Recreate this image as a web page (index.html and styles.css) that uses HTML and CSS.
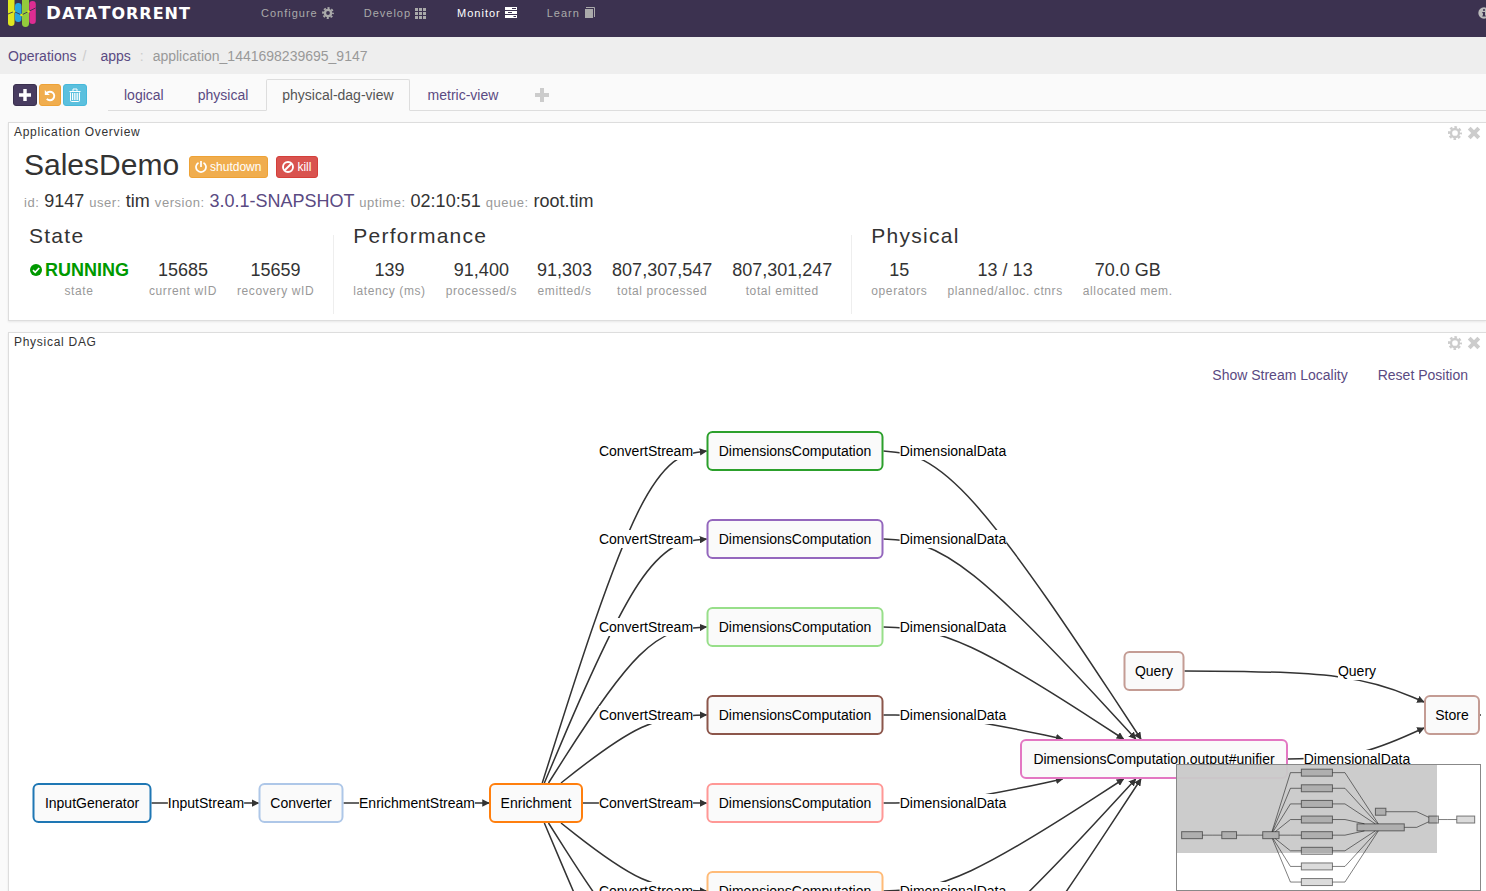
FILE: index.html
```
<!DOCTYPE html>
<html lang="en">
<head>
<meta charset="utf-8">
<title>DataTorrent - SalesDemo</title>
<link rel="stylesheet" href="styles.css">
</head>
<body>
<svg class="defs" width="0" height="0" aria-hidden="true">
  <symbol id="i-gear" viewBox="0 0 14 14"><circle cx="7" cy="7" r="3.6" fill="none" stroke="currentColor" stroke-width="2.8"/><circle cx="7" cy="7" r="5.8" fill="none" stroke="currentColor" stroke-width="2.2" stroke-dasharray="2.5 2.055" stroke-dashoffset="1.25"/></symbol>
  <symbol id="i-gear-thin" viewBox="0 0 14 14"><circle cx="7" cy="7" r="4" fill="none" stroke="currentColor" stroke-width="2.3"/><circle cx="7" cy="7" r="5.9" fill="none" stroke="currentColor" stroke-width="2.2" stroke-dasharray="2.6 2.034" stroke-dashoffset="1.3"/></symbol>
  <symbol id="i-x" viewBox="0 0 14 14"><path d="M2.200 2.200 11.800 11.800M11.800 2.200 2.200 11.800" stroke="currentColor" stroke-width="4"/></symbol>
  <symbol id="i-plus" viewBox="0 0 14 14"><path d="M7 0V14M0 7H14" stroke="currentColor" stroke-width="4"/></symbol>
</svg>

<header class="top">
  <a class="brand" href="#">
    <svg class="logo" width="28" height="27" viewBox="0 0 28 27" aria-hidden="true">
      <rect x="0" y="-3" width="6.5" height="29" rx="3.2" fill="#dfe621"/>
      <rect x="7" y="3" width="6.5" height="19" rx="3.2" fill="#27a4e0"/>
      <rect x="14" y="-3" width="7" height="30" rx="3.4" fill="#93cb3c"/>
      <rect x="21.3" y="1" width="6.5" height="23" rx="3.2" fill="#dd2d92"/>
      <path d="M0 14 6 11.5 13.5 15 20.5 11.5 27.5 8" fill="none" stroke="#3c3250" stroke-width=".9"/>
      <circle cx="6" cy="11.5" r="1.3" fill="#dfe621"/><circle cx="13.5" cy="15" r="1.3" fill="#dfe621"/><circle cx="20.5" cy="11.5" r="1.3" fill="#dfe621"/>
    </svg>
    <span class="wordmark"><b>D</b>ATA<b>T</b>ORRENT</span>
  </a>
  <nav class="nav">
    <a href="#">Configure <svg width="12" height="12"><use href="#i-gear"/></svg></a>
    <a href="#">Develop <svg width="12" height="12" viewBox="0 0 12 12" fill="currentColor"><path d="M0 1h3v3H0zM4 1h3v3H4zM8 1h3v3H8zM0 5h3v3H0zM4 5h3v3H4zM8 5h3v3H8zM0 9h3v3H0zM4 9h3v3H4zM8 9h3v3H8z"/></svg></a>
    <a class="on" href="#">Monitor <svg width="12" height="12" viewBox="0 0 12 12"><path d="M0 0h12v3H0zM0 4h12v3H0zM0 8h12v3H0z" fill="#fff"/><path d="M7 1.500h4M3 5.500h4M8.500 9.500h2.500" stroke="#3c3250"/></svg></a>
    <a href="#">Learn <svg width="12" height="12" viewBox="0 0 12 12"><path d="M1 2h8v9H1z" fill="currentColor"/><path d="M2 .5h8.500V10" fill="none" stroke="currentColor"/></svg></a>
  </nav>
  <button class="info" aria-label="About"><svg width="12" height="12" viewBox="0 0 12 12"><circle cx="6" cy="6" r="5.700" fill="#bbb"/><path d="M5 2.200h2v1.600H5zM4.300 5H7v3.400h.8v1.200H4.300V8.400H5V6.200h-.7z" fill="#3c3250"/></svg></button>
</header>

<nav class="crumbs">
  <a href="#">Operations</a><span class="sep slash">/</span><a href="#">apps</a><span class="sep colon">:</span><span class="current">application_1441698239695_9147</span>
</nav>

<div class="tabbar">
  <div class="tools">
    <button class="btn dark" aria-label="Add widget"><svg width="12" height="12"><use href="#i-plus"/></svg></button>
    <button class="btn orange" aria-label="Revert"><svg width="12" height="14" viewBox="0 0 12 14"><path d="M2.600 5.300A4.300 4.300 0 1 1 2.800 10.900" fill="none" stroke="#fff" stroke-width="1.900"/><path d="M.8 2v5h5z" fill="#fff"/></svg></button>
    <button class="btn blue" aria-label="Delete"><svg width="12" height="14" viewBox="0 0 12 14" fill="none" stroke="#fff"><path d="M.5 3.500h11M4 3V1h4v2M1.500 4.500V12.500q0 1 1 1h7q1 0 1-1V4.500M3.500 5v7M5.300 5v7M7 5v7M8.700 5v7"/></svg></button>
  </div>
  <div class="tabs">
    <a href="#">logical</a>
    <a href="#">physical</a>
    <a class="active" href="#">physical-dag-view</a>
    <a href="#">metric-view</a>
    <a class="add" href="#" aria-label="Add tab"><svg width="14" height="14"><use href="#i-plus"/></svg></a>
  </div>
</div>

<main>
  <section class="card">
    <div class="card-head">
      <h2>Application Overview</h2>
      <div class="card-tools">
        <button aria-label="Settings"><svg width="14" height="14"><use href="#i-gear-thin"/></svg></button>
        <button aria-label="Close"><svg width="14" height="14"><use href="#i-x"/></svg></button>
      </div>
    </div>
    <div class="overview">
      <div class="title">
        <h1>SalesDemo</h1>
        <button class="btn wide orange"><svg width="12" height="12" viewBox="0 0 12 12" fill="none" stroke="#fff" stroke-width="1.700"><path d="M3.500 1.700A5 5 0 1 0 8.500 1.700M6 0V6"/></svg>shutdown</button>
        <button class="btn wide red"><svg width="12" height="12" viewBox="0 0 12 12" fill="none" stroke="#fff" stroke-width="1.900"><circle cx="6" cy="6" r="5"/><path d="M9.500 2.500 2.500 9.500"/></svg>kill</button>
      </div>
      <p class="meta"><small>id:</small> 9147 <small>user:</small> tim <small>version:</small> <a href="#">3.0.1-SNAPSHOT</a> <small>uptime:</small> 02:10:51 <small>queue:</small> root.tim</p>
      <div class="groups">
        <section class="group">
          <h3>State</h3>
          <dl>
            <div><dd class="running"><svg width="14" height="14" viewBox="0 0 14 14"><circle cx="7" cy="7" r="6" fill="#090"/><path d="M4 7.200 6.200 9.300 10.200 5" fill="none" stroke="#fff" stroke-width="1.700"/></svg>RUNNING</dd><dt>state</dt></div>
            <div><dd>15685</dd><dt>current wID</dt></div>
            <div><dd>15659</dd><dt>recovery wID</dt></div>
          </dl>
        </section>
        <section class="group">
          <h3>Performance</h3>
          <dl>
            <div><dd>139</dd><dt>latency (ms)</dt></div>
            <div><dd>91,400</dd><dt>processed/s</dt></div>
            <div><dd>91,303</dd><dt>emitted/s</dt></div>
            <div><dd>807,307,547</dd><dt>total processed</dt></div>
            <div><dd>807,301,247</dd><dt>total emitted</dt></div>
          </dl>
        </section>
        <section class="group">
          <h3>Physical</h3>
          <dl>
            <div><dd>15</dd><dt>operators</dt></div>
            <div><dd>13 / 13</dd><dt>planned/alloc. ctnrs</dt></div>
            <div><dd>70.0 GB</dd><dt>allocated mem.</dt></div>
          </dl>
        </section>
      </div>
    </div>
  </section>

  <section class="card">
    <div class="card-head">
      <h2>Physical DAG</h2>
      <div class="card-tools">
        <button aria-label="Settings"><svg width="14" height="14"><use href="#i-gear-thin"/></svg></button>
        <button aria-label="Close"><svg width="14" height="14"><use href="#i-x"/></svg></button>
      </div>
    </div>
    <div class="dag-links"><a href="#">Show Stream Locality</a><a href="#">Reset Position</a></div>
    <div class="canvas">
      <svg class="dag" id="dag" width="100%" height="720">
        <defs><marker id="arrow" viewBox="0 0 10 10" refX="9" refY="5" markerUnits="strokeWidth" markerWidth="5" markerHeight="5" orient="auto"><path d="M0 0 10 5 0 10z" fill="#333"/></marker></defs>
      </svg>
      <svg class="minimap" id="minimap" width="305" height="127"></svg>
    </div>
  </section>
</main>
<script src="dag.js"></script>
</body>
</html>
```
FILE: styles.css
```
* { box-sizing: border-box; }
body {
  margin: 0;
  height: 100vh;
  overflow: hidden;
  background: #fafafa;
  color: #333;
  font: 14px/20px "Liberation Sans", Arial, sans-serif;
}
h1, h2, h3, p, dl, dd { margin: 0; font-weight: normal; }
a { color: #5a4a82; text-decoration: none; }
button { font: inherit; border: 0; background: none; padding: 0; cursor: pointer; }
svg { display: block; flex: none; }
.defs { position: absolute; }

.top {
  display: flex;
  align-items: flex-start;
  height: 37px;
  padding-left: 8px;
  background: #3c3250;
}
.brand { display: flex; gap: 10px; width: 253px; color: #fff; }
.wordmark { font: bold 16px/26px "DejaVu Sans", sans-serif; letter-spacing: 1px; }
.wordmark b { font-size: 18px; }
.nav { display: flex; flex: 1; gap: 30px; padding-top: 3px; }
.nav a {
  display: flex;
  align-items: center;
  gap: 4px;
  color: #aaa;
  font-size: 11px;
  letter-spacing: 1px;
}
.nav .on { color: #fff; }
.info { margin: 7px -4px 0 0; }

.crumbs {
  display: flex;
  align-items: center;
  height: 37px;
  padding: 0 8px;
  background: #eee;
}
.sep { color: #ccc; }
.slash { padding: 0 14px 0 6px; }
.colon { padding: 0 9px; }
.current { color: #999; }

.tabbar { display: flex; padding: 5px 0 0 13px; }
.tools { display: flex; gap: 2px; padding-top: 5px; margin-right: 21px; }
.btn {
  display: flex;
  align-items: center;
  justify-content: center;
  gap: 3px;
  width: 24px;
  height: 22px;
  border: 1px solid;
  border-radius: 3px;
  color: #fff;
  font-size: 12px;
  line-height: 18px;
}
.btn.wide { width: auto; padding: 0 6px 0 5px; }
.dark { background: #483c60; border-color: #3a304e; }
.tools .orange { width: 22px; }
.orange { background: #f0ad4e; border-color: #eea236; }
.blue { background: #5bc0de; border-color: #46b8da; }
.red { background: #d9534f; border-color: #d43f3a; }
.tabs { display: flex; flex: 1; gap: 2px; border-bottom: 1px solid #ddd; }
.tabs a {
  height: 32px;
  margin-bottom: -1px;
  padding: 5px 15px;
  border: 1px solid transparent;
  border-radius: 2px 2px 0 0;
}
.tabs .active { color: #555; background: #fafafa; border-color: #ddd #ddd #fafafa; }
.tabs .add { color: #ccc; padding: 8px 18px; }

main { display: flex; flex-direction: column; gap: 11px; padding: 11px 0 0 8px; }
.card {
  background: #fff;
  border: 1px solid #ddd;
  border-right: 0;
  box-shadow: 0 1px 2px rgba(0, 0, 0, .08);
}
.card-head { display: flex; justify-content: space-between; padding: 0 5px; }
.card-head h2 { font-size: 12px; line-height: 18px; letter-spacing: .06em; }
.card-tools { display: flex; gap: 5px; padding-top: 2px; color: #ccc; }
.card-tools button { color: inherit; }
.overview { padding: 0 15px 6px; }
.title { display: flex; align-items: center; gap: 8px; height: 50px; padding-bottom: 2px; }
.title h1 { margin-right: 2px; font-size: 30px; line-height: 48px; }
.title .btn { margin-top: 4px; }
.meta { font-size: 18px; line-height: 20px; }
.meta small { color: #999; font-size: 13px; letter-spacing: .04em; }
.groups { display: flex; margin-top: 22px; }
.group { padding: 0 19px; height: 79px; border-right: 1px solid #eee; }
.group:first-child { padding-left: 5px; }
.group:last-child { border: 0; }
.group h3 { margin-top: -11px; font-size: 21px; line-height: 24px; letter-spacing: .06em; }
.group dl { display: flex; gap: 20px; margin-top: 11px; text-align: center; }
.group dl div { display: flex; flex-direction: column; }
dd { font-size: 18px; line-height: 22px; }
dt { color: #999; font-size: 12px; line-height: 20px; letter-spacing: .05em; }
.running { display: flex; align-items: center; gap: 2px; color: #090; font-weight: bold; }

.dag-links { display: flex; justify-content: flex-end; gap: 30px; padding: 14px 18px 6px; }
.canvas { position: relative; padding-right: 5px; }
.dag text { font-size: 14px; text-anchor: middle; fill: #000; }
.edge { fill: none; stroke: #333; stroke-width: 1.5; }
.label-bg { fill: #fff; }
.node { fill: #fafafa; stroke-width: 2; }
.minimap { position: absolute; right: 5px; top: 373px; background: rgba(255, 255, 255, .95); border: 1px solid #888; }
.mini-view { fill: rgba(0, 0, 0, .2); }
.mini-edge { fill: none; stroke: #000; stroke-opacity: .5; }
.mini-node { fill: #000; fill-opacity: .14; stroke: #000; stroke-opacity: .5; }
```
FILE: dag.js
```
// Nodes: centre x, centre y, width, border colour, caption.
const NODES = {
  input: [83, 412, 117, '#1f77b4', 'InputGenerator'],
  conv: [292, 412, 83, '#aec7e8', 'Converter'],
  enrich: [527, 412, 92, '#ff7f0e', 'Enrichment'],
  unifier: [1145, 368, 266, '#e377c2', 'DimensionsComputation.output#unifier'],
  query: [1145, 280, 59, '#c49c94', 'Query'],
  store: [1443, 324, 54, '#c49c94', 'Store'],
  result: [1624, 324, 101, '#7f7f7f', 'QueryResult'],
};
const EDGES = [
  ['input', 'conv', 197, 412, 'InputStream'],
  ['conv', 'enrich', 408, 412, 'EnrichmentStream'],
  ['query', 'store', 1348, 280, 'Query'],
  ['unifier', 'store', 1348, 368, 'DimensionalData'],
  ['store', 'result', 1520, 324, ''],
];
['#2ca02c', '#9467bd', '#98df8a', '#8c564b', '#ff9896', '#ffbb78', '#d62728', '#c5b0d5'].forEach((colour, i) => {
  const y = 60 + 88 * i;
  NODES['dim' + i] = [786, y, 175, colour, 'DimensionsComputation'];
  EDGES.push(['enrich', 'dim' + i, 637, y, 'ConvertStream']);
  EDGES.push(['dim' + i, 'unifier', 944, y, 'DimensionalData']);
});
const H = 38;
const NS = 'http://www.w3.org/2000/svg';
const mix = (p, q, t) => [p[0] + (q[0] - p[0]) * t, p[1] + (q[1] - p[1]) * t];

function add(parent, name, attrs, text) {
  const el = document.createElementNS(NS, name);
  for (const key in attrs) el.setAttribute(key, attrs[key]);
  if (text) el.textContent = text;
  parent.appendChild(el);
  return el;
}

// Point where the ray from a node's centre to (px, py) leaves its box.
function border([x, y, w], px, py) {
  const dx = px - x, dy = py - y, hw = w / 2 + 1, hh = H / 2 + 1;
  const t = Math.min(dx ? hw / Math.abs(dx) : Infinity, dy ? hh / Math.abs(dy) : Infinity);
  return [x + dx * t, y + dy * t];
}

// Bundled B-spline: the middle point is pulled slightly towards the chord.
function bundle(a, mid, c) {
  const b = mix(mix(a, c, 0.5), mid, 0.95);
  const pts = [a, a, a, b, c, c, c];
  let d = 'M' + a;
  for (let i = 1; i < pts.length - 3; i++) {
    const c1 = mix(pts[i], pts[i + 1], 1 / 3), c2 = mix(pts[i], pts[i + 1], 2 / 3);
    const end = mix(c2, mix(pts[i + 1], pts[i + 2], 1 / 3), 0.5);
    d += 'C' + c1 + ' ' + c2 + ' ' + end;
  }
  return d + 'L' + c;
}

const dag = document.getElementById('dag');
const mini = document.getElementById('minimap');
const S = 0.1776;
const m = ([x, y]) => [x * S + 0.3, y * S - 3];
add(mini, 'rect', { class: 'mini-view', x: 0, y: 0, width: 260, height: 88 });

const routes = EDGES.map(([from, to, x, y, label]) => {
  const a = border(NODES[from], x, y), b = border(NODES[to], x, y);
  return { a, mid: [x, y], b, label };
});
routes.forEach(({ a, mid, b }) => {
  add(dag, 'path', { class: 'edge', d: bundle(a, mid, b), 'marker-end': 'url(#arrow)' });
  add(mini, 'polyline', { class: 'mini-edge', points: [m(a), m(mid), m(b)].join(' ') });
});
routes.forEach(({ mid: [x, y], label }) => {
  if (!label) return;
  const bg = add(dag, 'rect', { class: 'label-bg' });
  const w = add(dag, 'text', { x, y: y + 5 }, label).getBBox().width;
  for (const [k, v] of [['x', x - w / 2], ['y', y - 9], ['width', w], ['height', 18]]) bg.setAttribute(k, v);
});
for (const [x, y, w, stroke, label] of Object.values(NODES)) {
  const [mx, my] = m([x, y]);
  add(mini, 'rect', { class: 'mini-node', x: mx - w * S / 2, y: my - 3.5, width: w * S, height: 7 });
  if (x > dag.clientWidth + w / 2) continue;
  add(dag, 'rect', { class: 'node', x: x - w / 2, y: y - H / 2, width: w, height: H, rx: 5, stroke });
  add(dag, 'text', { x, y: y + 5 }, label);
}
```
